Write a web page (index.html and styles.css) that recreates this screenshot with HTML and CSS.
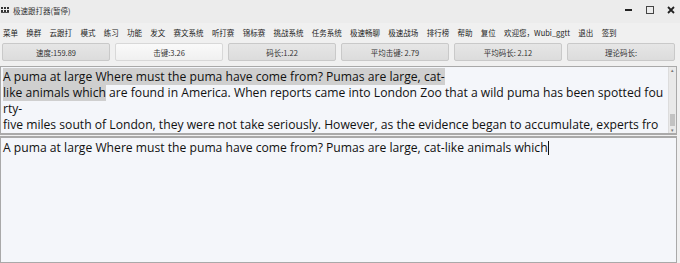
FILE: index.html
```html
<!DOCTYPE html>
<html lang="zh-CN">
<head>
  <meta charset="UTF-8" />
  <title>极速跟打器</title>
  <link rel="stylesheet" href="styles.css">
</head>
<body>

<div class="window">
  <div class="titlebar">
    <span class="app-icon">
      <svg width="9" height="7" viewBox="0 0 9 7">
        <rect x="0" y="0" width="2" height="2" fill="#333"/>
        <rect x="3" y="0" width="2" height="2" fill="#333"/>
        <rect x="6" y="0" width="2" height="2" fill="#333"/>
        <rect x="0" y="3" width="2" height="2" fill="#333"/>
        <rect x="3" y="3" width="2" height="2" fill="#333"/>
        <rect x="6" y="3" width="2" height="2" fill="#333"/>
        <rect x="0" y="5" width="8" height="1" fill="#555"/>
      </svg>
    </span>
    <span class="title">极速跟打器(暂停)</span>
    <div class="controls">
      <svg width="10" height="10" viewBox="0 0 10 10"><rect x="1" y="4" width="7" height="2" fill="#222"/></svg>
      <svg width="10" height="10" viewBox="0 0 10 10"><rect x="1.5" y="1.5" width="7" height="7" fill="none" stroke="#444" stroke-width="1"/></svg>
      <svg width="10" height="10" viewBox="0 0 10 10"><path d="M2 2 L8 8 M8 2 L2 8" stroke="#222" stroke-width="1.8"/></svg>
    </div>
  </div>

  <ul class="menu">
    <li>菜单</li>
    <li>换群</li>
    <li>云跟打</li>
    <li>模式</li>
    <li>练习</li>
    <li>功能</li>
    <li>发文</li>
    <li>赛文系统</li>
    <li>听打赛</li>
    <li>锦标赛</li>
    <li>挑战系统</li>
    <li>任务系统</li>
    <li>极速畅聊</li>
    <li>极速战场</li>
    <li>排行榜</li>
    <li>帮助</li>
    <li>复位</li>
    <li>欢迎您，Wubi_ggtt</li>
    <li>退出</li>
    <li>签到</li>
  </ul>

  <div class="stats">
    <div class="stat">速度:159.89</div>
    <div class="stat active">击键:3.26</div>
    <div class="stat">码长:1.22</div>
    <div class="stat">平均击键: 2.79</div>
    <div class="stat">平均码长: 2.12</div>
    <div class="stat">理论码长:</div>
  </div>

  <div class="source">
    <div class="source-text">
      <span class="done">A puma at large Where must the puma have come from? Pumas are large, cat-</span><br>
      <span class="done">like animals which</span> are found in America. When reports came into London Zoo that a wild puma has been spotted fou<br>
      rty-<br>
      five miles south of London, they were not take seriously. However, as the evidence began to accumulate, experts fro
    </div>
    <div class="scrollbar">
      <span class="arrow">&#9652;</span>
      <span class="thumb"></span>
      <span class="arrow">&#9662;</span>
    </div>
  </div>

  <div class="input">
    <span>A puma at large Where must the puma have come from? Pumas are large, cat-like animals which</span><span class="caret"></span>
  </div>
</div>

</body>
</html>
```

FILE: styles.css
```css
html, body {
  margin: 0;
  padding: 0;
  background: #f0f0f0;
  overflow: hidden;
}

.window {
  width: 680px;
  height: 263px;
  display: flex;
  flex-direction: column;
  font-family: "Noto Sans CJK SC", "Noto Sans", sans-serif;
  color: #222;
}

.titlebar {
  height: 20px;
  display: flex;
  align-items: center;
  padding: 0 0 3px 1px;
  background: #ececec;
}

.app-icon {
  display: flex;
  width: 12px;
}

.title {
  font-size: 7.5px;
  color: #333;
}

.controls {
  margin-left: auto;
  display: flex;
  gap: 11px;
  padding-right: 4px;
}

.menu {
  list-style: none;
  margin: 0;
  padding: 0 0 0 3px;
  height: 19px;
  display: flex;
  align-items: center;
  gap: 8.3px;
  font-size: 7.5px;
  color: #222;
  white-space: nowrap;
}

.stats {
  display: grid;
  grid-template-columns: repeat(6, 108px);
  gap: 5px;
  padding: 1px 0 0 2px;
  height: 20px;
}

.stat {
  height: 18px;
  display: flex;
  align-items: center;
  justify-content: center;
  font-size: 7.5px;
  color: #333;
  background: linear-gradient(#e6e6e6, #dcdcdc);
  border: 1px solid #c9c9c9;
  box-sizing: border-box;
  border-radius: 2px;
}

.stat.active {
  background: linear-gradient(#fafafa, #f0f0f0);
  border-color: #d8d8d8;
}

.source {
  margin-top: 3px;
  height: 66px;
  display: flex;
  border: 1px solid #a9a9a9;
  border-bottom-width: 2px;
  background: #f4f6fa;
  margin-right: 3px;
}

.source-text {
  flex: 1;
  padding: 2px 0 0 2px;
  font-family: "Open Sans", "Noto Sans CJK SC", sans-serif;
  font-size: 12.15px;
  line-height: 16px;
  color: #111;
  white-space: nowrap;
  overflow: hidden;
}

.done {
  background: #cfcfcf;
}

.scrollbar {
  width: 7px;
  display: flex;
  flex-direction: column;
  align-items: center;
  background: #e9e9e9;
  border-left: 1px solid #dcdcdc;
}

.arrow {
  font-size: 5px;
  line-height: 6px;
  color: #777;
}

.thumb {
  margin-top: auto;
  width: 5px;
  height: 12px;
  background: #c2c2c2;
  margin-bottom: 1px;
}

.input {
  margin-top: 1px;
  margin-right: 3px;
  flex: 1;
  border: 1px solid #a9a9a9;
  border-top-width: 2px;
  background: #f4f6fa;
  padding: 2px 0 0 2px;
  font-family: "Open Sans", "Noto Sans CJK SC", sans-serif;
  font-size: 12.15px;
  line-height: 16px;
  color: #111;
}

.caret {
  display: inline-block;
  width: 1px;
  height: 14px;
  background: #111;
  vertical-align: -3px;
}
```
